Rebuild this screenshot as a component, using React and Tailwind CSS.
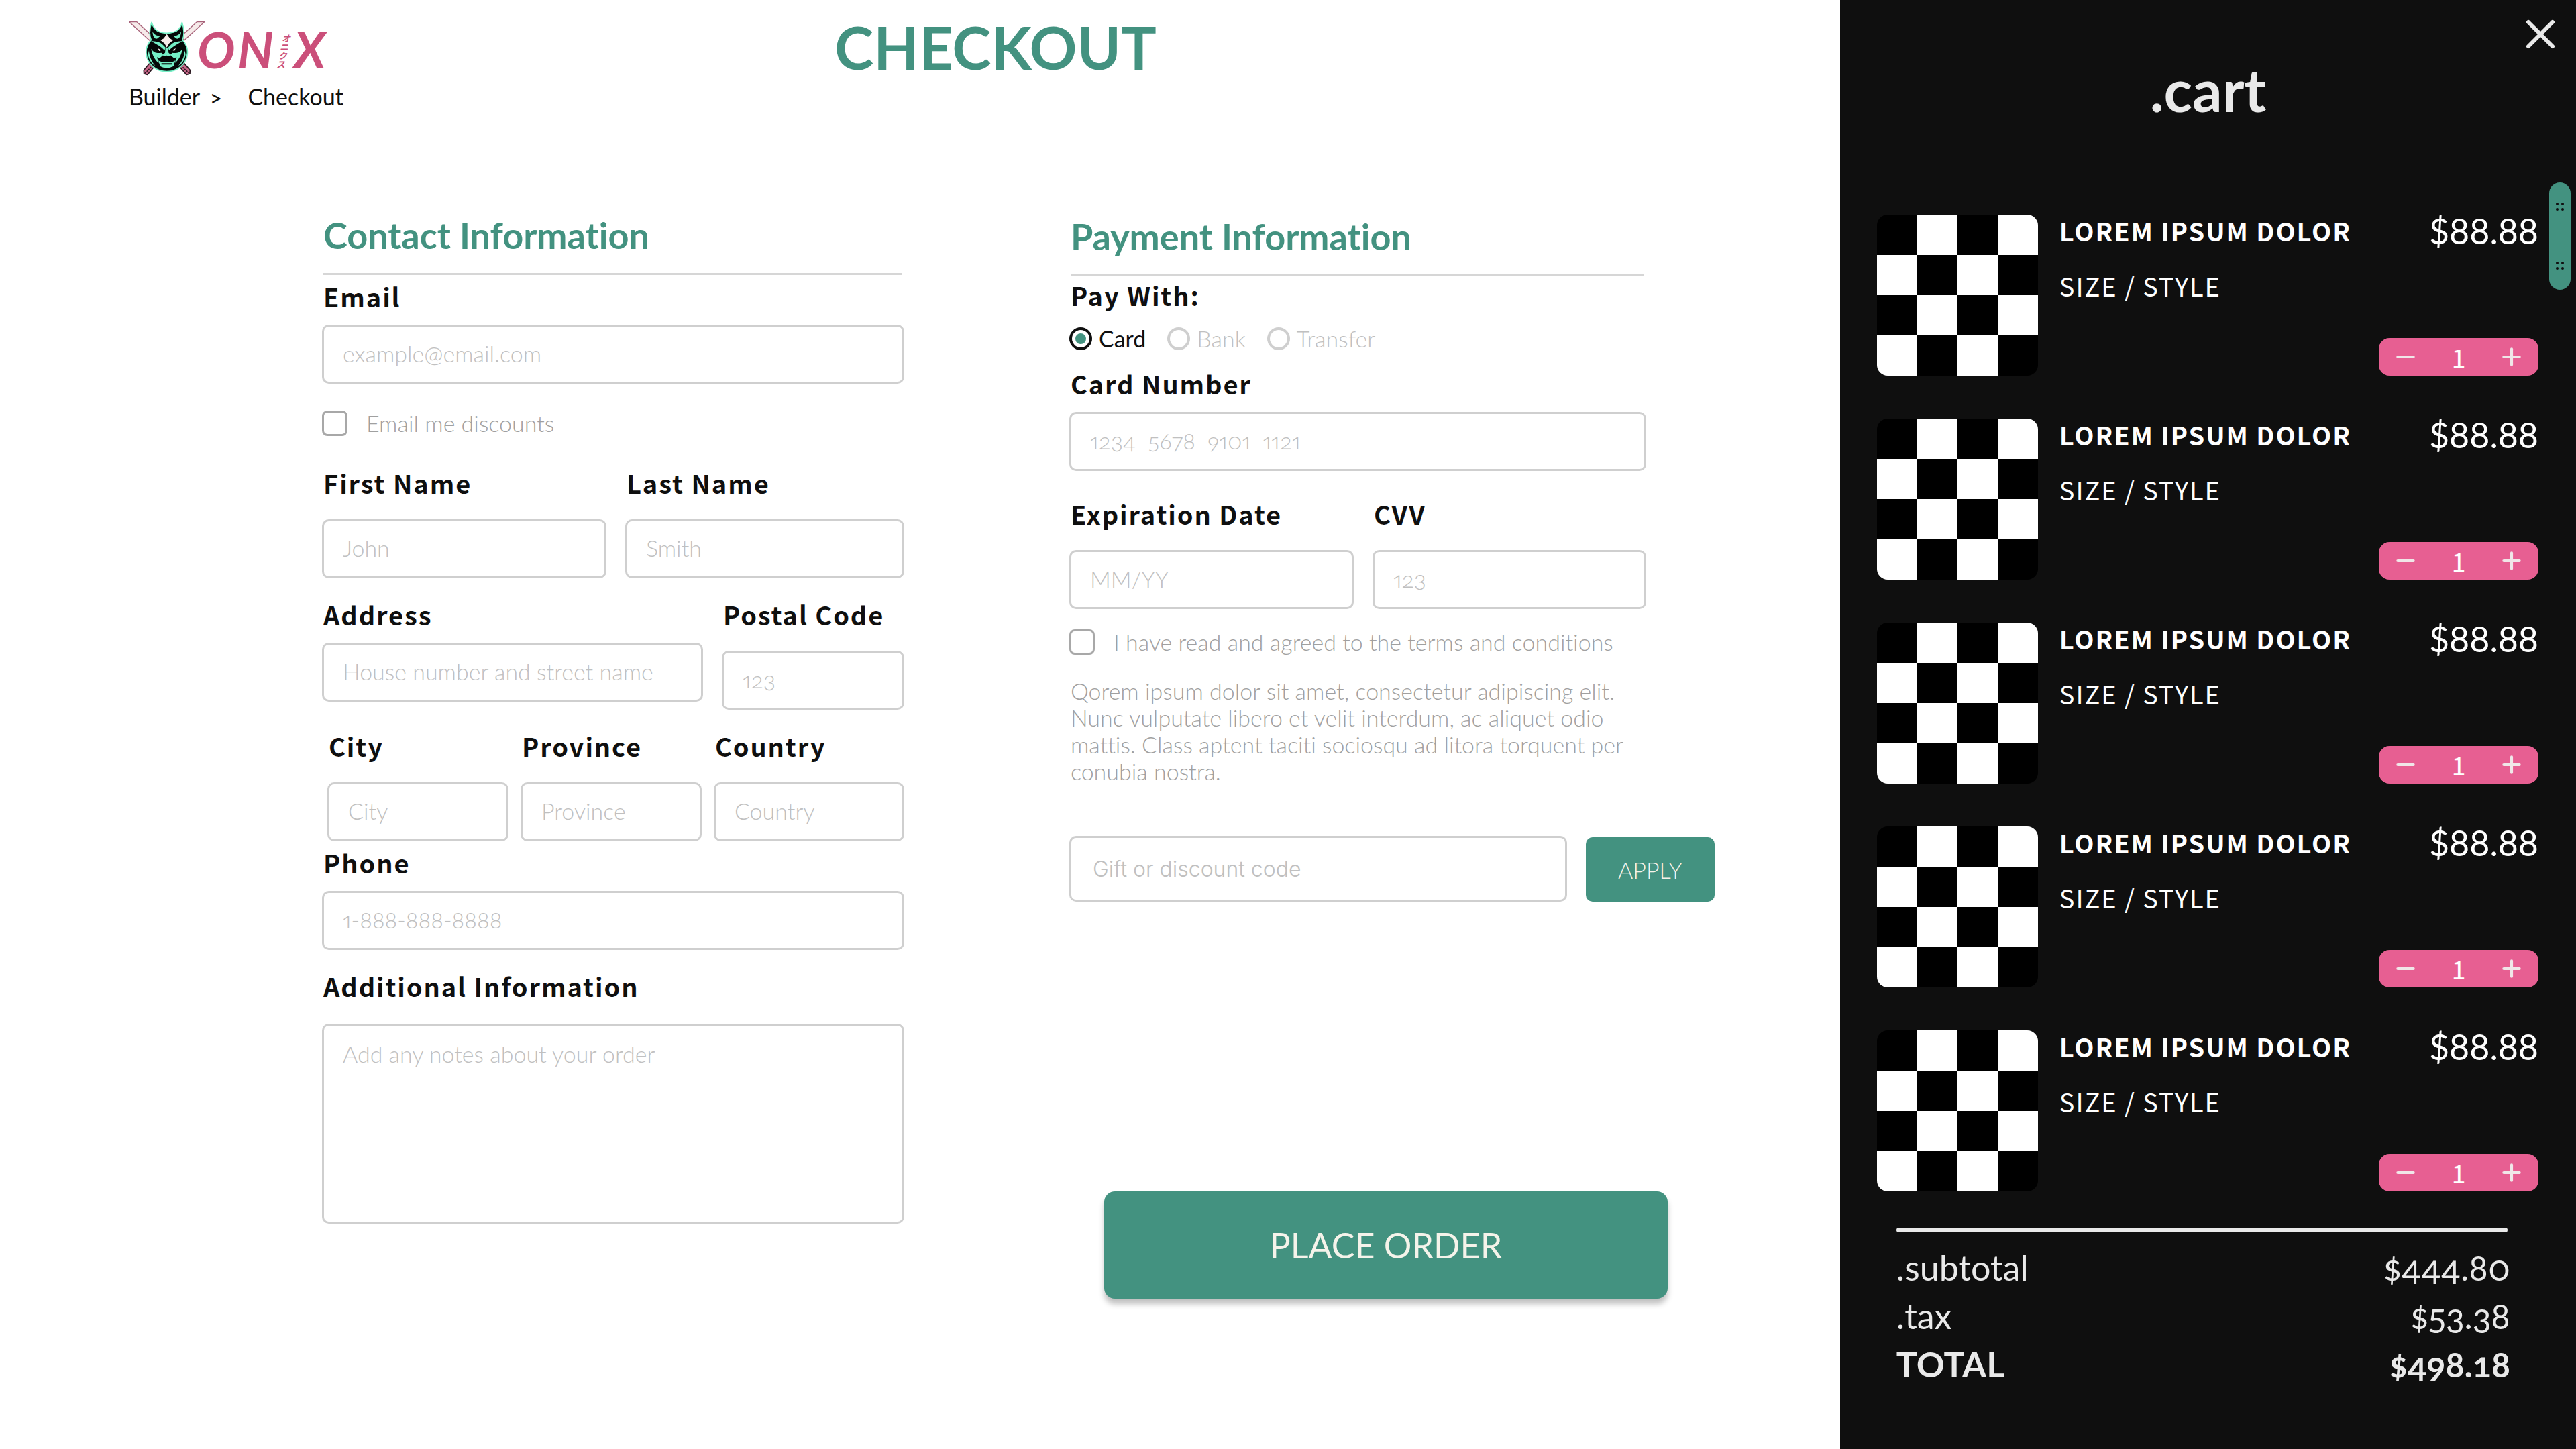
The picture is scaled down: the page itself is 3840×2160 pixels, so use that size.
import { useState } from "react";
import { X, Plus, Minus } from "lucide-react";

const cartItems = [1, 2, 3, 4, 5].map((id) => ({
  id,
  name: "LOREM IPSUM DOLOR",
  detail: "SIZE / STYLE",
  price: "$88.88",
}));

const tiles = Array.from({ length: 16 }, (_, i) => (i + Math.floor(i / 4)) % 2);

const labelClass =
  "block pl-0.5 font-['Noto_Sans_CJK_SC',sans-serif] text-[38px] leading-[48px] font-bold tracking-wider whitespace-nowrap text-[#0f0f0f]";

const inputClass =
  "block w-full rounded-[10px] border-[3px] border-[#cfcfcf] bg-white px-7 pb-1 text-[34px] font-light text-[#0f0f0f] placeholder:text-[#c0c0c0]";

function Field({ id, label, placeholder, type = "text", gap = "mt-[18px]" }) {
  return (
    <div>
      <label htmlFor={id} className={labelClass}>
        {label}
      </label>
      <input
        id={id}
        type={type}
        placeholder={placeholder}
        className={`${inputClass} ${gap} h-[88px]`}
      />
    </div>
  );
}

function CheckRow({ id, children }) {
  return (
    <div className="flex h-[38px] items-center gap-7">
      <input
        id={id}
        type="checkbox"
        className="size-[38px] shrink-0 appearance-none rounded-lg border-[3px] border-[#a8a8a8] checked:bg-[#439280]"
      />
      <label
        htmlFor={id}
        className="text-[34px] leading-[40px] font-light whitespace-nowrap text-[#a0a0a0]"
      >
        {children}
      </label>
    </div>
  );
}

function SectionTitle({ children }) {
  return (
    <h2 className="mr-1 ml-0.5 border-b-[3px] border-[#d6d6d6] pb-6 text-[54px] leading-[64px] font-bold text-[#439280]">
      {children}
    </h2>
  );
}

function Logo() {
  return (
    <svg
      viewBox="0 -8 300 96"
      className="block h-24 w-[300px]"
      role="img"
      aria-label="Onix"
    >
      {/* swords and mask */}
      <g transform="translate(-2 -6) scale(0.333333)" strokeLinejoin="round">
        <g fill="#f6ebea" stroke="#a8637a" strokeWidth="4">
          <path d="M8 20 L42 20 L112 84 L98 102 Z" />
          <path d="M344 20 L310 20 L240 84 L254 102 Z" />
        </g>
        <g fill="#c9688a" stroke="#2a1820" strokeWidth="5">
          <path d="M98 206 L118 222 L90 256 L74 252 L73 236 Z" />
          <path d="M254 206 L234 222 L264 256 L279 252 L280 236 Z" />
        </g>
        <path
          d="M78 250 L108 220 M276 250 L244 220"
          stroke="#2a1820"
          strokeWidth="5"
          strokeDasharray="6 5"
        />
        <path
          d="M108 22 C114 44 126 60 146 66 C164 71 188 71 206 66 C226 60 240 44 244 22 C254 52 254 82 246 100 C262 118 270 136 268 160 C264 212 222 242 176 242 C130 242 88 212 84 160 C82 136 90 118 106 100 C98 82 98 52 108 22 Z"
          fill="#050807"
          stroke="#74efc6"
          strokeWidth="5"
        />
        <g fill="#74efc6">
          <path d="M112 64 C120 78 132 82 146 83 L134 94 C124 98 114 90 112 64 Z" />
          <path d="M240 64 C232 78 220 82 206 83 L218 94 C228 98 238 90 240 64 Z" />
          <path d="M104 104 C122 108 144 106 158 122 L170 134 L166 148 C152 130 130 120 104 104 Z" />
          <path d="M248 104 C230 108 208 106 194 122 L182 134 L186 148 C200 130 222 120 248 104 Z" />
          <path d="M96 148 C98 176 108 198 124 216 C110 210 94 188 92 164 Z" />
          <path d="M256 148 C254 176 244 198 228 216 C242 210 258 188 260 164 Z" />
          <path d="M106 140 C120 162 138 160 152 158 L160 168 L144 182 L132 178 L140 204 C122 190 110 166 106 140 Z" />
          <path d="M246 140 C232 162 214 160 200 158 L192 168 L208 182 L220 178 L212 204 C230 190 242 166 246 140 Z" />
          <path d="M170 138 L182 138 L184 158 L196 168 L186 174 L176 170 L166 174 L156 168 L168 158 Z" />
          <path d="M138 192 C150 204 202 204 214 192 L206 218 C190 228 162 228 146 218 Z" />
        </g>
        <path
          d="M176 74 L190 94 L204 102 L186 116 L176 134 L166 116 L148 102 L162 94 Z"
          fill="#f6ebea"
        />
        <path
          d="M150 184 L164 178 L176 184 L188 178 L202 184 M152 208 L200 208"
          fill="none"
          stroke="#050807"
          strokeWidth="6"
        />
        <path
          d="M136 138 L152 146 L142 150 Z M216 138 L200 146 L210 150 Z"
          fill="#f6ebea"
        />
      </g>
      <g fill="#cb4f7a" className="font-['Lato',sans-serif] font-bold italic">
        <text x="102" y="70" fontSize="75">O</text>
        <text x="162" y="70" fontSize="75">N</text>
        <text x="246" y="70" fontSize="75">X</text>
      </g>
      <g
        fill="#cb4f7a"
        fontSize="13"
        className="font-['Noto_Sans_CJK_JP',sans-serif] font-bold italic"
      >
        <text x="228" y="30">オ</text>
        <text x="225" y="43">ニ</text>
        <text x="223" y="56">ク</text>
        <text x="220" y="69">ス</text>
      </g>
    </svg>
  );
}

function ContactForm() {
  return (
    <section>
      <SectionTitle>Contact Information</SectionTitle>
      <div className="mt-2">
        <Field id="email" type="email" label="Email" placeholder="example@email.com" />
      </div>
      <div className="mt-10">
        <CheckRow id="discounts">Email me discounts</CheckRow>
      </div>
      <div className="mt-[46px] grid grid-cols-[424fr_416fr] gap-7">
        <Field id="first" label="First Name" placeholder="John" gap="mt-[30px]" />
        <Field id="last" label="Last Name" placeholder="Smith" gap="mt-[30px]" />
      </div>
      <div className="mt-[30px] grid grid-cols-[568fr_272fr] gap-7">
        <Field id="address" label="Address" placeholder="House number and street name" />
        <Field id="postal" label="Postal Code" placeholder="123" gap="mt-[30px]" />
      </div>
      <div className="mt-[30px] ml-2 grid grid-cols-[270fr_270fr_284fr] gap-[18px]">
        <Field id="city" label="City" placeholder="City" gap="mt-[30px]" />
        <Field id="province" label="Province" placeholder="Province" gap="mt-[30px]" />
        <Field id="country" label="Country" placeholder="Country" gap="mt-[30px]" />
      </div>
      <div className="mt-2">
        <Field id="phone" type="tel" label="Phone" placeholder="1-888-888-8888" />
      </div>
      <div className="mt-[30px]">
        <label htmlFor="notes" className={labelClass}>
          Additional Information
        </label>
        <textarea
          id="notes"
          placeholder="Add any notes about your order"
          className={`${inputClass} mt-8 h-[298px] resize-none py-5 leading-[44px]`}
        />
      </div>
    </section>
  );
}

function PaymentForm() {
  const [method, setMethod] = useState("Card");

  return (
    <section className="pt-0.5">
      <div className="mr-[102px]">
        <SectionTitle>Payment Information</SectionTitle>
        <fieldset className="mt-1">
          <legend className={labelClass}>Pay With:</legend>
          <div className="mt-6 flex h-[34px] items-center gap-8">
            {["Card", "Bank", "Transfer"].map((name) => (
              <label
                key={name}
                className="flex items-center gap-2.5 text-[34px] leading-[40px] font-light text-[#c0c0c0] has-checked:font-normal has-checked:text-[#0f0f0f]"
              >
                <input
                  type="radio"
                  name="method"
                  checked={method === name}
                  onChange={() => setMethod(name)}
                  className="size-[34px] appearance-none rounded-full border-4 border-[#cfcfcf] bg-clip-content p-[5px] checked:border-[#0f0f0f] checked:bg-[#439280]"
                />
                {name}
              </label>
            ))}
          </div>
        </fieldset>
        <div className="mt-[26px]">
          <Field id="card" label="Card Number" placeholder="1234  5678  9101  1121" />
        </div>
        <div className="mt-10 grid grid-cols-[424fr_408fr] gap-7">
          <Field id="expiry" label="Expiration Date" placeholder="MM/YY" gap="mt-[30px]" />
          <Field id="cvv" label="CVV" placeholder="123" gap="mt-[30px]" />
        </div>
        <div className="mt-[30px]">
          <CheckRow id="terms">
            I have read and agreed to the terms and conditions
          </CheckRow>
        </div>
        <p className="mt-[34px] pl-0.5 text-[34px] leading-[40px] font-light text-[#a0a0a0]">
          Qorem ipsum dolor sit amet, consectetur adipiscing elit.
          <br />
          Nunc vulputate libero et velit interdum, ac aliquet odio
          <br />
          mattis. Class aptent taciti sociosqu ad litora torquent per
          <br />
          conubia nostra.
        </p>
      </div>
      <div className="mt-[76px] flex items-end gap-7">
        <input
          type="text"
          aria-label="Gift or discount code"
          placeholder="Gift or discount code"
          className="h-[98px] min-w-0 flex-1 rounded-[10px] border-[3px] border-[#cfcfcf] px-8 font-['Inter',sans-serif] text-[32px] font-light placeholder:text-[#c0c0c0]"
        />
        <button
          type="button"
          className="h-24 w-48 rounded-[10px] bg-[#439280] text-[34px] font-light text-[#f5f3ea]"
        >
          APPLY
        </button>
      </div>
      <button
        type="submit"
        className="mt-[432px] ml-[52px] h-40 w-[840px] rounded-2xl bg-[#439280] text-[52px] text-[#f5f3ea] shadow-[0_8px_8px_rgba(0,0,0,0.25)]"
      >
        PLACE ORDER
      </button>
    </section>
  );
}

function CartItem({ item }) {
  const [quantity, setQuantity] = useState(1);

  return (
    <li className="flex h-60">
      <div className="grid size-60 shrink-0 grid-cols-4 overflow-hidden rounded-2xl">
        {tiles.map((light, i) => (
          <span key={i} className={light ? "bg-white" : "bg-black"} />
        ))}
      </div>
      <div className="ml-8 flex flex-1 flex-col justify-between">
        <div className="flex justify-between">
          <div className="font-['Noto_Sans_CJK_SC',sans-serif] text-[38px] leading-[48px] tracking-wider whitespace-nowrap">
            <h3 className="font-bold">{item.name}</h3>
            <p className="mt-[34px]">{item.detail}</p>
          </div>
          <p className="text-[52px] leading-[48px] [font-feature-settings:'lnum','tnum']">
            {item.price}
          </p>
        </div>
        <div className="flex h-14 w-[238px] items-center justify-between self-end rounded-2xl bg-[#e75f92] px-5">
          <button
            type="button"
            aria-label="Remove one"
            onClick={() => setQuantity(Math.max(0, quantity - 1))}
          >
            <Minus className="size-10 text-[#f0e6e8]" strokeWidth={2.5} />
          </button>
          <span className="font-['Noto_Sans_CJK_SC',sans-serif] text-[38px] leading-none">
            {quantity}
          </span>
          <button
            type="button"
            aria-label="Add one"
            onClick={() => setQuantity(quantity + 1)}
          >
            <Plus className="size-10 text-[#f0e6e8]" strokeWidth={2.5} />
          </button>
        </div>
      </div>
    </li>
  );
}

function Grip() {
  return (
    <svg viewBox="0 0 12 12" className="size-3" fill="#0f0f0f">
      <circle cx="2" cy="2" r="2" />
      <circle cx="10" cy="2" r="2" />
      <circle cx="2" cy="10" r="2" />
      <circle cx="10" cy="10" r="2" />
    </svg>
  );
}

function Cart() {
  return (
    <aside className="w-2/7 shrink-0 bg-[#0f0f0f] text-white">
      <div className="flex justify-end pt-[15px] pr-[17px]">
        <button type="button" aria-label="Close cart">
          <X className="size-18 text-[#e9e9e9]" strokeWidth={2} />
        </button>
      </div>
      <h2 className="text-center text-[88px] leading-[92px] font-bold text-[#e9e9e9]">
        .cart
      </h2>
      <div className="relative mt-[141px] mr-14 ml-[55px]">
        <ul className="grid gap-16">
          {cartItems.map((item) => (
            <CartItem key={item.id} item={item} />
          ))}
        </ul>
        {/* scroll thumb */}
        <div className="absolute -top-12 -right-12 flex h-40 w-8 flex-col items-center justify-between rounded-full bg-[#439280] py-[30px]">
          <Grip />
          <Grip />
        </div>
      </div>
      <div className="mt-[54px] mr-[98px] ml-[84px] text-[52px] leading-[72px] text-[#e9e9e9]">
        <hr className="mr-1 h-[7px] rounded-full border-0 bg-[#e9e9e9]" />
        <dl className="mt-4">
          <div className="flex justify-between">
            <dt>.subtotal</dt>
            <dd>$444.80</dd>
          </div>
          <div className="flex justify-between">
            <dt>.tax</dt>
            <dd>$53.38</dd>
          </div>
          <div className="flex justify-between font-bold">
            <dt>TOTAL</dt>
            <dd className="[font-feature-settings:'onum','tnum']">$498.18</dd>
          </div>
        </dl>
      </div>
    </aside>
  );
}

export default function App() {
  return (
    <div className="flex min-h-screen bg-white font-['Lato',sans-serif] [font-feature-settings:'onum','pnum','liga'_0]">
      <main className="flex-1">
        <header className="flex pt-[22px] pr-[287px] pl-48">
          <div className="w-80 shrink-0 pt-0.5">
            <Logo />
            <nav className="mt-1 flex text-[34px] leading-[40px] text-[#0f0f0f]">
              <a href="#builder" className="w-[124px]">
                Builder
              </a>
              <span className="w-[58px]">&gt;</span>
              <a href="#checkout">Checkout</a>
            </nav>
          </div>
          <h1 className="flex-1 text-center text-[88px] leading-[96px] font-bold text-[#439280]">
            CHECKOUT
          </h1>
        </header>
        <form className="mt-[155px] grid grid-cols-[868fr_962fr] gap-[246px] pr-[187px] pl-[480px]">
          <ContactForm />
          <PaymentForm />
        </form>
      </main>
      <Cart />
    </div>
  );
}
